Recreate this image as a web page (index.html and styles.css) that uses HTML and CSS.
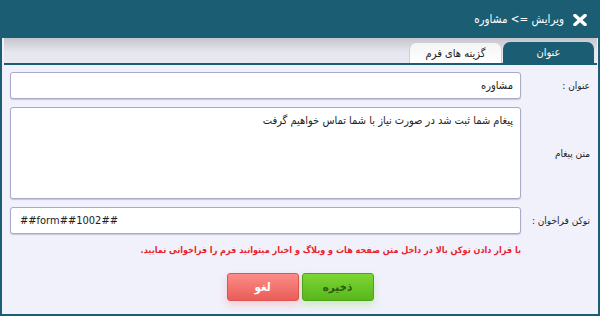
FILE: index.html
```html
<!DOCTYPE html>
<html lang="fa" dir="rtl">
<head>
    <meta charset="UTF-8">
    <title>ویرایش => مشاوره</title>
    <link rel="stylesheet" href="styles.css">
</head>
<body>
    <div class="dialog">
        <div class="titlebar">
            <span class="close">
                <svg width="14" height="12" viewBox="0 0 14 12">
                    <path d="M2 1.5 L12 10.5 M12 1.5 L2 10.5" stroke="#fff" stroke-width="3.6" stroke-linecap="round"/>
                </svg>
            </span>
            <span class="title">ویرایش => مشاوره</span>
        </div>

        <div class="content">
            <div class="tabs">
                <div class="tab active">عنوان</div>
                <div class="tab">گزینه های فرم</div>
            </div>

            <div class="form">
                <label class="lbl">عنوان :</label>
                <input class="field" type="text" value="مشاوره">

                <label class="lbl">متن پیغام</label>
                <textarea class="field area">پیغام شما ثبت شد در صورت نیاز با شما تماس خواهیم گرفت</textarea>

                <label class="lbl">توکن فراخوان :</label>
                <input class="field" type="text" dir="ltr" value="##form##1002##">

                <p class="note">با قرار دادن توکن بالا در داخل متن صفحه هات و وبلاگ و اخبار میتوانید فرم را فراخوانی نمایید.</p>
            </div>

            <div class="actions">
                <button class="btn save">ذخیره</button>
                <button class="btn cancel">لغو</button>
            </div>
        </div>
    </div>
</body>
</html>
```

FILE: styles.css
```css
body {
    margin: 0;
    font-family: "DejaVu Sans Condensed", "DejaVu Sans", sans-serif;
    font-size: 11px;
    background: #fff;
}

.dialog {
    width: 600px;
    height: 316px;
    box-sizing: border-box;
    display: flex;
    flex-direction: column;
    background: #1b5e74;
}

.titlebar {
    height: 37px;
    display: flex;
    align-items: center;
    padding: 0 13px 0 0;
    gap: 9px;
    color: #fff;
}

.close {
    display: flex;
    margin-top: 3px;
}

.title {
    font-size: 11.5px;
    margin-top: 1px;
}

.content {
    flex: 1;
    margin: 1px 2px 2px 2px;
    background: #f1f1fc;
    display: flex;
    flex-direction: column;
}

.tabs {
    height: 25px;
    margin: 0 1px 0 2px;
    display: flex;
    align-items: flex-end;
    padding-right: 3px;
    background: linear-gradient(#c5c5cd, #e6e6ee 55%, #e9e9f1);
    border-bottom: 2px solid #1b5e74;
}

.tab {
    height: 21px;
    box-sizing: border-box;
    display: flex;
    align-items: center;
    justify-content: center;
    border-radius: 7px 7px 0 0;
    font-size: 11px;
}

.tab.active {
    width: 91px;
    background: #1b5e74;
    color: #fff;
}

.tab:not(.active) {
    width: 93px;
    margin-right: 1px;
    background: linear-gradient(#f4f4f4, #fff);
    border: 1px solid #cfcfd6;
    border-bottom: none;
    color: #222;
}

.form {
    display: grid;
    grid-template-columns: 69px 1fr;
    row-gap: 8px;
    padding: 7px 8px 0 8px;
}

.lbl {
    align-self: center;
    color: #222;
    font-size: 10px;
}

.field {
    height: 27px;
    box-sizing: border-box;
    border: 1px solid #a9a9c8;
    border-radius: 3px;
    box-shadow: 0 1px 1px rgba(120, 120, 160, 0.35);
    background: #fff;
    padding: 0 7px;
    font-family: "DejaVu Sans Condensed", "DejaVu Sans", sans-serif;
    font-size: 11px;
    color: #222;
    outline: none;
}

.field[dir="ltr"] {
    text-align: left;
    padding-left: 9px;
}

.area {
    height: 92px;
    padding: 6px 7px;
    resize: none;
}

.note {
    grid-column: 2;
    margin: 3px 0 0;
    color: #e8232b;
    font-size: 9px;
    font-weight: bold;
}

.actions {
    display: flex;
    justify-content: center;
    gap: 3px;
    margin-top: 18px;
}

.btn {
    width: 72px;
    height: 28px;
    border-radius: 3px;
    font-family: "DejaVu Sans Condensed", "DejaVu Sans", sans-serif;
    font-size: 11.5px;
    font-weight: bold;
}

.save {
    background: linear-gradient(#7dd634, #58b71c);
    border: 1px solid #4aa318;
    color: #2b5d0e;
    box-shadow: 0 4px 8px rgba(120, 210, 60, 0.3);
}

.cancel {
    background: linear-gradient(#fb8d88, #ea5d58);
    border: 1px solid #dc5450;
    color: #fff;
    box-shadow: 0 4px 8px rgba(240, 100, 100, 0.25);
}
```
